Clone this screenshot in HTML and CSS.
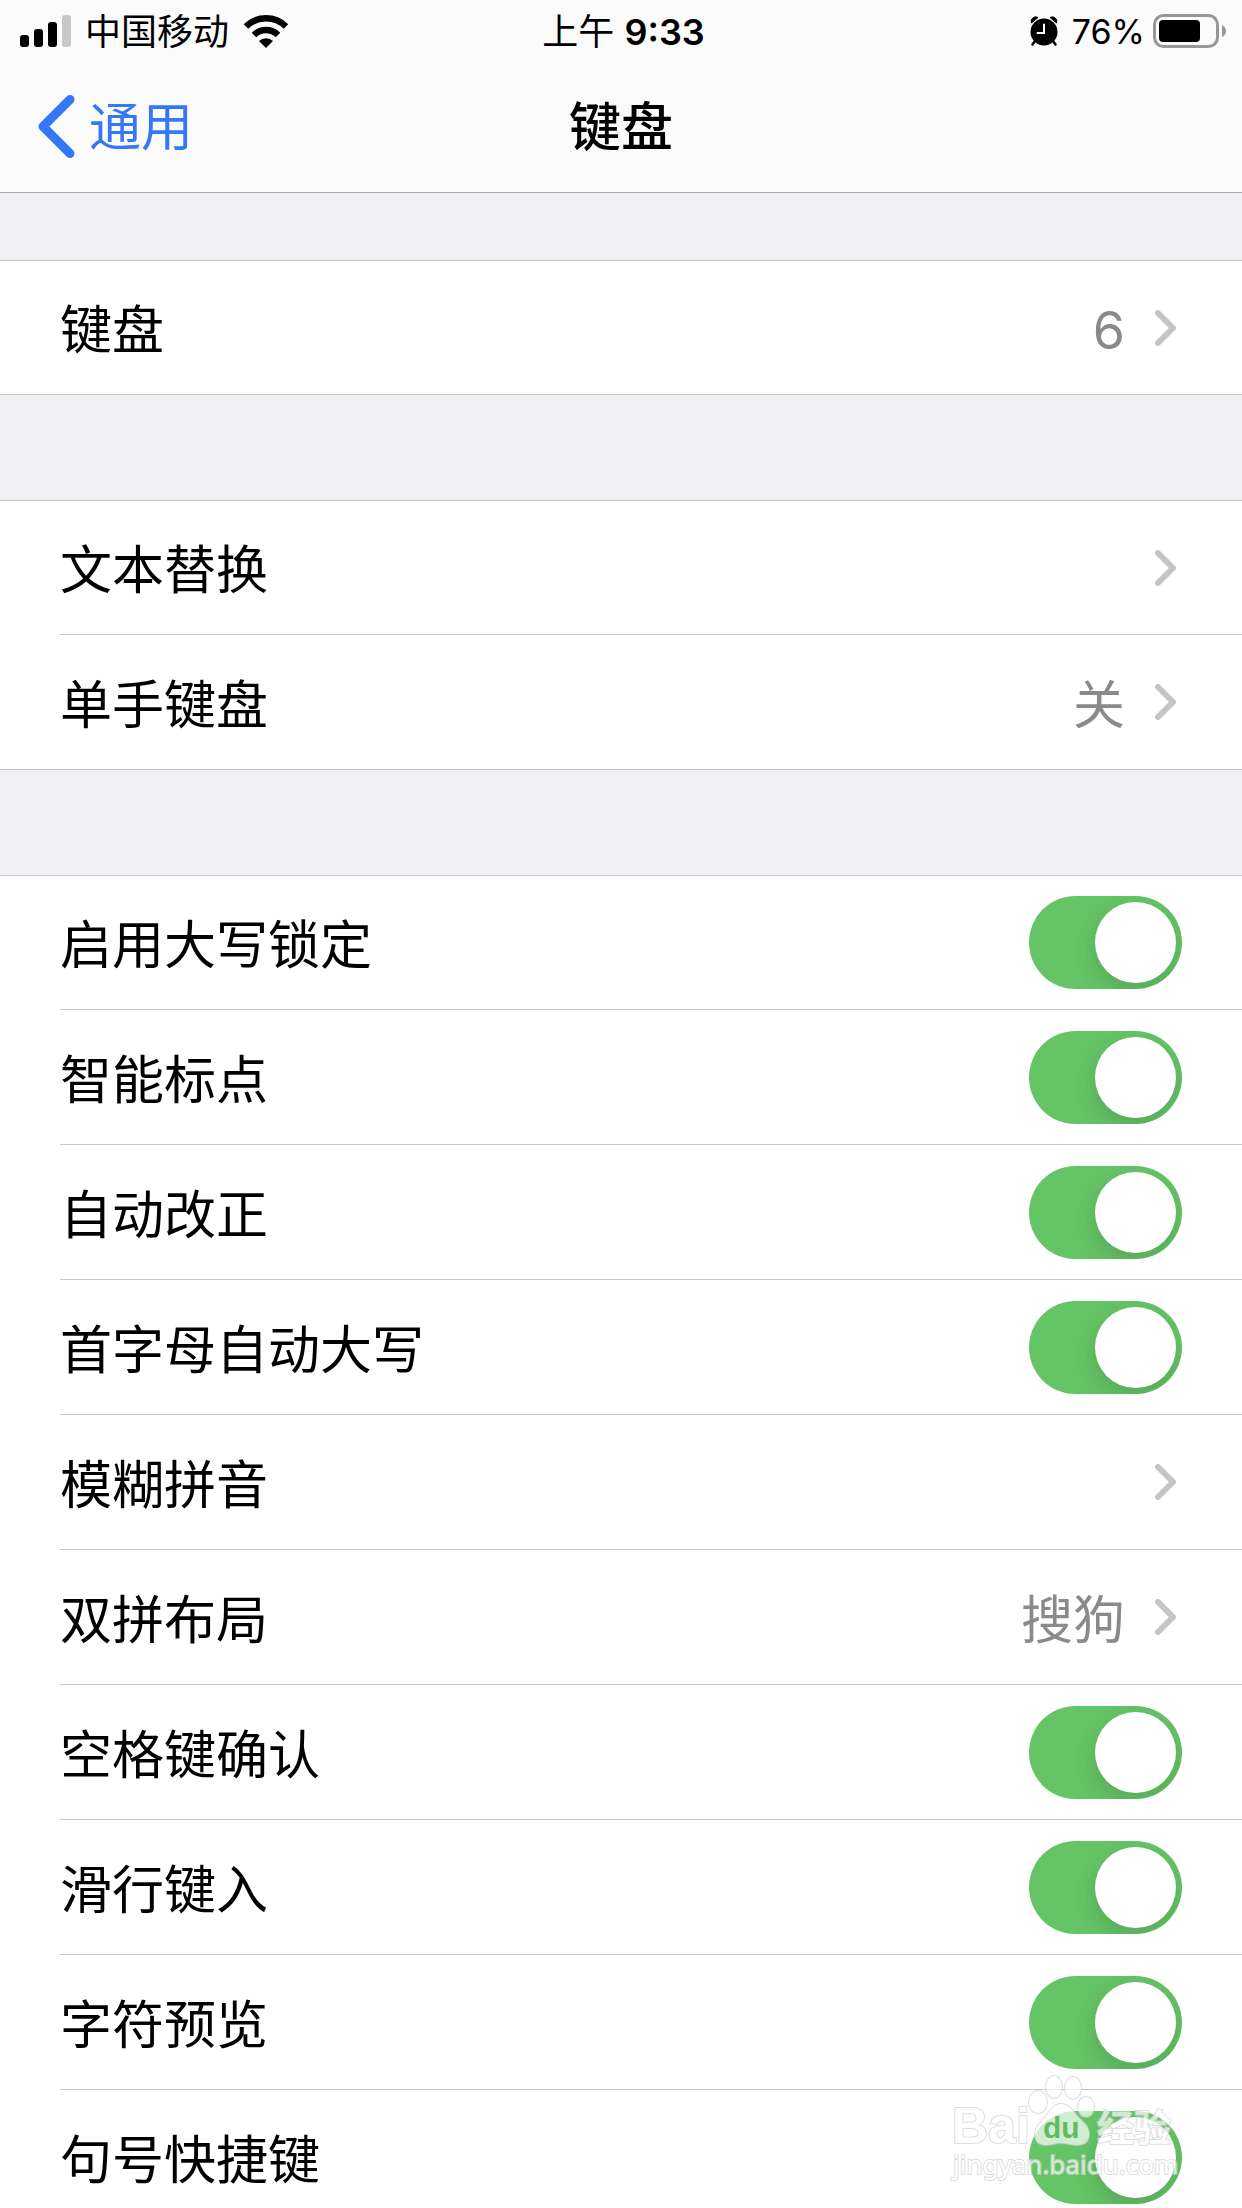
FILE: index.html
```
<!DOCTYPE html>
<html lang="zh-CN">

<head>
    <meta charset="UTF-8">
    <meta name="viewport" content="width=device-width, initial-scale=1.0">
    <title>键盘</title>
    <link rel="stylesheet" href="styles.css">
</head>

<body>
    <!-- 公用图标 -->
    <svg class="sprite" aria-hidden="true">
        <symbol id="arrow" viewBox="0 0 21 36">
            <path d="M3 3 L18 18 L3 33" fill="none" stroke="#c5c5c7" stroke-width="6" stroke-linecap="round" stroke-linejoin="round" />
        </symbol>
    </svg>

    <div class="screen">
        <header class="header">
            <div class="status">
                <div class="status-left">
                    <svg class="signal" width="51" height="32" viewBox="0 0 51 32">
                        <rect x="0" y="20" width="9" height="12" rx="3" />
                        <rect x="14" y="14" width="9" height="18" rx="3" />
                        <rect x="28" y="7" width="9" height="25" rx="3" />
                        <rect x="42" y="0" width="9" height="32" rx="3" fill="#c8c8c8" />
                    </svg>
                    <span>中国移动</span>
                    <svg class="wifi" width="46" height="33" viewBox="0 0 46 33">
                        <path d="M3 11.5 A28.5 28.5 0 0 1 43 11.5" fill="none" stroke="#000" stroke-width="6.4" />
                        <path d="M11 20 A17 17 0 0 1 35 20" fill="none" stroke="#000" stroke-width="6.4" />
                        <path d="M23 33 L16 26 A10 10 0 0 1 30 26 Z" />
                    </svg>
                </div>
                <div class="status-time">上午 <b>9:33</b></div>
                <div class="status-right">
                    <svg class="alarm" width="28" height="30" viewBox="0 0 28 30">
                        <circle cx="14" cy="16" r="13.5" />
                        <path d="M1.5 7 A4.5 4.5 0 0 1 8 1.5 Z M26.5 7 A4.5 4.5 0 0 0 20 1.5 Z" stroke="#000" stroke-width="1" stroke-linejoin="round" />
                        <path d="M5 25 L2.5 28.5 M23 25 L25.5 28.5" stroke="#000" stroke-width="2.5" stroke-linecap="round" />
                        <path d="M14 8.5 V17 H7.5" fill="none" stroke="#fbfbfc" stroke-width="2" stroke-linecap="round" />
                    </svg>
                    <span class="percent">76%</span>
                    <svg class="battery" width="74" height="34" viewBox="0 0 74 34">
                        <rect x="1.5" y="1.5" width="63" height="31" rx="9" fill="none" stroke="#979797" stroke-width="3" />
                        <rect x="6" y="6" width="41" height="22" rx="4" />
                        <path d="M69 11 Q73 13 73 17 Q73 21 69 23 Z" fill="#979797" />
                    </svg>
                </div>
            </div>
            <nav class="nav">
                <a class="back" href="#">
                    <svg width="37" height="63" viewBox="0 0 37 63">
                        <path d="M32 4.5 L5 31.5 L32 58.5" fill="none" stroke="#3478f6" stroke-width="9" stroke-linecap="round" stroke-linejoin="round" />
                    </svg>
                    <span class="back-text">通用</span>
                </a>
                <h1 class="title">键盘</h1>
            </nav>
        </header>

        <main class="main">
            <section class="group">
                <a class="row" href="#"><span class="name">键盘</span><span class="value">6</span><svg class="arrow"><use href="#arrow" /></svg></a>
            </section>

            <section class="group">
                <a class="row" href="#"><span class="name">文本替换</span><svg class="arrow"><use href="#arrow" /></svg></a>
                <a class="row" href="#"><span class="name">单手键盘</span><span class="value">关</span><svg class="arrow"><use href="#arrow" /></svg></a>
            </section>

            <section class="group">
                <label class="row"><span class="name">启用大写锁定</span><input class="switch" type="checkbox" checked></label>
                <label class="row"><span class="name">智能标点</span><input class="switch" type="checkbox" checked></label>
                <label class="row"><span class="name">自动改正</span><input class="switch" type="checkbox" checked></label>
                <label class="row"><span class="name">首字母自动大写</span><input class="switch" type="checkbox" checked></label>
                <a class="row" href="#"><span class="name">模糊拼音</span><svg class="arrow"><use href="#arrow" /></svg></a>
                <a class="row" href="#"><span class="name">双拼布局</span><span class="value">搜狗</span><svg class="arrow"><use href="#arrow" /></svg></a>
                <label class="row"><span class="name">空格键确认</span><input class="switch" type="checkbox" checked></label>
                <label class="row"><span class="name">滑行键入</span><input class="switch" type="checkbox" checked></label>
                <label class="row"><span class="name">字符预览</span><input class="switch" type="checkbox" checked></label>
                <label class="row"><span class="name">句号快捷键</span><input class="switch" type="checkbox" checked></label>
            </section>
        </main>

        <!-- 水印 -->
        <svg class="watermark" width="230" height="112" viewBox="0 0 230 112">
            <g class="mark">
                <text class="mark-bai" x="2" y="71">Bai</text>
                <ellipse cx="104" cy="15" rx="8" ry="11" />
                <ellipse cx="123" cy="16" rx="8" ry="11" />
                <ellipse cx="88" cy="30" rx="9" ry="11" />
                <ellipse cx="136" cy="35" rx="8" ry="10" />
                <path d="M111 32 C118 32 122 37 127 44 C132 50 139 53 139 62 C139 70 134 73 127 73 C121 73 117 71 111 71 C105 71 101 73 96 73 C89 73 85 69 85 62 C85 54 92 50 97 43 C101 37 104 32 111 32 Z" />
                <text class="mark-cn" x="147" y="70">经验</text>
                <text class="mark-url" x="3" y="102">jingyan.baidu.com</text>
            </g>
            <text class="mark-du" x="93" y="66">du</text>
        </svg>
    </div>
</body>

</html>
```
FILE: styles.css
```
* {
    margin: 0;
    padding: 0;
    box-sizing: border-box;
}

body {
    background: #f0f0f5;
    color: #000;
    font-family: Inter, "Noto Sans CJK SC", sans-serif;
    font-size: 52px;
    line-height: 72px;
}

a {
    color: inherit;
    text-decoration: none;
}

.sprite {
    display: none;
}

.screen {
    position: relative;
    height: 100vh;
    overflow: hidden;
}

/* 顶部 */
.header {
    background: #fbfbfc;
    border-bottom: 1px solid #a9a9ad;
}

.status {
    display: grid;
    grid-template-columns: 1fr auto 1fr;
    align-items: center;
    height: 60px;
    padding: 0 15px 0 20px;
    font-size: 36px;
    line-height: 60px;
}

.status span,
.status-time {
    padding-top: 2px;
}

.status-left,
.status-right {
    display: flex;
    align-items: center;
}

.status-left {
    gap: 14px;
}

.status-right {
    justify-content: flex-end;
    gap: 8px;
}

.alarm {
    margin-right: 6px;
}

.percent {
    font-size: 34px;
}

.status-time b {
    font-weight: 600;
}

.nav {
    display: grid;
    grid-template-columns: 1fr auto 1fr;
    align-items: center;
    height: 132px;
    padding: 0 38px;
}

.back {
    display: flex;
    align-items: center;
    gap: 14px;
    color: #3478f6;
}

.back-text,
.title {
    padding-top: 3px;
}

.title {
    font-size: 52px;
    font-weight: 500;
}

/* 列表 */
.main {
    padding-top: 67px;
}

.group {
    margin-bottom: 105px;
    padding-left: 60px;
    background: #fff;
    border-top: 1px solid #c6c6c8;
    border-bottom: 1px solid #c6c6c8;
}

.row {
    display: flex;
    align-items: center;
    height: 135px;
    padding-right: 60px;
    border-bottom: 1px solid #c6c6c8;
}

.row:first-child {
    height: 134px;
}

.row:last-child {
    height: 134px;
    border-bottom: 0;
}

.row:only-child {
    height: 133px;
}

.name,
.value {
    padding-top: 7px;
}

.name {
    flex: 1;
}

.value {
    color: #8a8a8d;
}

.arrow {
    width: 21px;
    height: 36px;
    margin: 0 6px 0 30px;
}

/* 开关 */
.switch {
    appearance: none;
    width: 153px;
    height: 93px;
    padding: 6px;
    border-radius: 47px;
    background: #c6c6c8;
    overflow: hidden;
}

.switch::before {
    content: "";
    display: block;
    width: 81px;
    height: 81px;
    border-radius: 50%;
    background: #fff;
    box-shadow: 0 9px 24px rgba(0, 0, 0, .15);
}

.switch:checked {
    background: #65c466;
}

.switch:checked::before {
    margin-left: 60px;
}

/* 水印 */
.watermark {
    position: absolute;
    right: 62px;
    bottom: 24px;
    pointer-events: none;
}

.mark {
    fill: #fff;
    stroke: #d0d0d0;
    stroke-width: 2px;
    opacity: .7;
    paint-order: stroke;
}

.mark-bai {
    font: bold 50px "Liberation Sans", sans-serif;
}

.mark-cn {
    font: bold 37px "Noto Sans CJK SC", sans-serif;
}

.mark-url {
    font: 26px "Noto Sans", sans-serif;
}

.mark-du {
    font: bold 30px "Liberation Sans", sans-serif;
    fill: #62bb63;
}
```
